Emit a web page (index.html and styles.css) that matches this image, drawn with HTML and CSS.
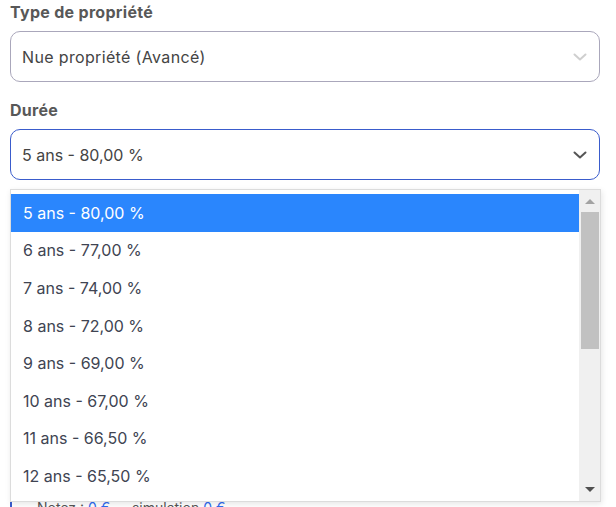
FILE: index.html
```html
<!DOCTYPE html>
<html lang="fr">
<head>
<meta charset="utf-8">
<title>Simulation</title>
<link rel="stylesheet" href="styles.css">
</head>
<body>
<div class="form">
  <div class="field first">
    <label class="label">Type de propriété</label>
    <div class="select">
      <span class="value wide">Nue propriété (Avancé)</span>
      <svg class="chev light" width="14" height="8" viewBox="0 0 14 8"><path d="M1.5 1.5 L7 6.5 L12.5 1.5" fill="none" stroke="currentColor" stroke-width="2" stroke-linecap="round" stroke-linejoin="round"/></svg>
    </div>
  </div>
  <div class="field">
    <label class="label">Durée</label>
    <div class="select focus">
      <span class="value">5 ans - 80,00 %</span>
      <svg class="chev dark" width="14" height="8" viewBox="0 0 14 8"><path d="M1.5 1.5 L7 6.5 L12.5 1.5" fill="none" stroke="currentColor" stroke-width="2" stroke-linecap="round" stroke-linejoin="round"/></svg>
    </div>
  </div>
  <div class="note">Notez : <span class="blue">0 €</span> — simulation <span class="blue">0 €</span></div>

  <div class="popup">
    <div class="options">
      <div class="opt sel">5 ans - 80,00 %</div>
      <div class="opt">6 ans - 77,00 %</div>
      <div class="opt">7 ans - 74,00 %</div>
      <div class="opt">8 ans - 72,00 %</div>
      <div class="opt">9 ans - 69,00 %</div>
      <div class="opt">10 ans - 67,00 %</div>
      <div class="opt">11 ans - 66,50 %</div>
      <div class="opt">12 ans - 65,50 %</div>
    </div>
    <div class="scrollbar">
      <div class="arrow up"></div>
      <div class="thumb"></div>
      <div class="track-fill"></div>
      <div class="arrow down"></div>
    </div>
  </div>
</div>
</body>
</html>
```
FILE: styles.css
```css
* { box-sizing: border-box; }
html, body { margin: 0; padding: 0; background: #fff; }
body {
  font-family: Inter, "Noto Sans", "Liberation Sans", sans-serif;
  width: 616px;
  height: 507px;
  overflow: hidden;
}
.form {
  position: relative;
  padding: 2px 16px 0 10px;
}
.field + .field { margin-top: 18px; }
.label {
  display: block;
  font-size: 16px;
  line-height: 21px;
  font-weight: 700;
  letter-spacing: 0.3px;
  color: #585858;
  margin-bottom: 8px;
}
.select {
  height: 51px;
  border: 1px solid #aaa7bb;
  border-radius: 10px;
  display: flex;
  align-items: center;
  justify-content: space-between;
  padding: 0 12px 0 11px;
  font-size: 16px;
  color: #444;
}
.value.wide { letter-spacing: 0.35px; }
.select.focus { border-color: #3a5ccc; }
.chev.light { color: #cfcfcf; }
.chev.dark { color: #555; }
.note {
  margin-top: 318px;
  border-left: 2px solid #3a5ccc;
  padding-left: 25px;
  font-size: 14px;
  line-height: 20px;
  color: #555;
}
.blue { color: #2f6cf0; }

.popup {
  position: absolute;
  top: 189px;
  left: 10px;
  width: 591px;
  height: 313px;
  background: #fff;
  border: 1px solid #dcdcdc;
  box-shadow: 1px 2px 6px rgba(0,0,0,0.10);
  display: flex;
}
.options {
  flex: 1;
  padding-top: 4px;
}
.opt {
  height: 37.6px;
  display: flex;
  align-items: center;
  padding-left: 12px;
  font-size: 16px;
  color: #404452;
}
.opt.sel {
  background: #2a86fd;
  color: #fff;
}
.scrollbar {
  width: 21px;
  background: #f0f0f0;
  display: flex;
  flex-direction: column;
  align-items: center;
  padding: 0 1px;
}
.arrow {
  width: 0; height: 0;
  border-left: 5px solid transparent;
  border-right: 5px solid transparent;
}
.arrow.up {
  border-bottom: 5px solid #a3a3a3;
  margin-top: 9px;
  margin-bottom: 8px;
}
.thumb {
  width: 18px;
  height: 137px;
  background: #c1c1c1;
}
.track-fill { flex: 1; }
.arrow.down {
  border-top: 5px solid #505050;
  margin-bottom: 9px;
}
```
